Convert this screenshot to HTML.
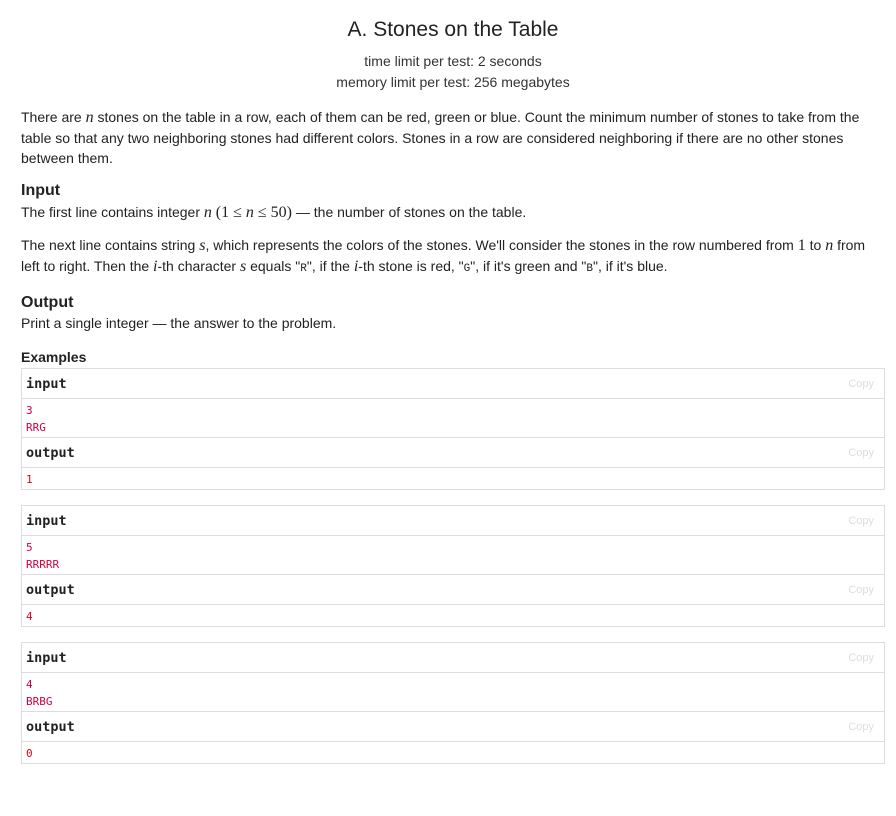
<!DOCTYPE html>
<html><head><meta charset="utf-8"><style>
body{margin:0;background:#fff;font-family:"Liberation Sans",sans-serif;color:#222;font-size:14px;}
.abs{position:absolute;}
.c{left:0;width:906px;text-align:center;}
.m{font-family:"Liberation Serif",serif;font-style:italic;font-size:16px;}
.r{font-family:"Liberation Serif",serif;font-size:16px;}
.p{left:21px;width:850px;line-height:20px;}
h3{margin:0;font-size:16px;font-weight:bold;}
.box{position:absolute;left:21px;width:862px;border:1px solid #ddd;}
.hd{height:29px;border-bottom:1px solid #ddd;position:relative;font-family:"DejaVu Sans Mono","Liberation Mono",monospace;font-weight:bold;font-size:13.5px;line-height:30px;padding-left:4px;color:#222;}
.hd span{position:absolute;right:10px;top:0;font-family:"Liberation Sans",sans-serif;font-weight:normal;font-size:11px;color:#ddd;}
.dt{font-family:"DejaVu Sans Mono","Liberation Mono",monospace;font-size:11px;line-height:17px;padding:3px 4px 1px;border-bottom:1px solid #ddd;color:#d00040;}
.dt:last-child{border-bottom:none;}
.code{font-family:"Liberation Mono",monospace;font-size:11px;}
</style></head><body>
<div class="abs c" style="top:18px;font-size:21px;color:#222;">A. Stones on the Table</div>
<div class="abs c" style="top:53px;font-size:14px;color:#333;">time limit per test: 2 seconds</div>
<div class="abs c" style="top:74px;font-size:14px;color:#333;">memory limit per test: 256 megabytes</div>
<div class="abs p" style="top:107px;">There are <span class="m">n</span> stones on the table in a row, each of them can be red, green or blue. Count the minimum number of stones to take from the table so that any two neighboring stones had different colors. Stones in a row are considered neighboring if there are no other stones between them.</div>
<div class="abs p" style="top:181px;"><h3>Input</h3></div>
<div class="abs p" style="top:202px;">The first line contains integer <span class="m">n</span> <span class="r">(1 ≤ <i>n</i> ≤ 50)</span> — the number of stones on the table.</div>
<div class="abs p" style="top:235px;">The next line contains string <span class="m">s</span>, which represents the colors of the stones. We'll consider the stones in the row numbered from <span class="r">1</span> to <span class="m">n</span> from left to right. Then the <span class="m">i</span>-th character <span class="m">s</span> equals "<span class="code">R</span>", if the <span class="m">i</span>-th stone is red, "<span class="code">G</span>", if it's green and "<span class="code">B</span>", if it's blue.</div>
<div class="abs p" style="top:293px;"><h3>Output</h3></div>
<div class="abs p" style="top:313px;">Print a single integer — the answer to the problem.</div>
<div class="abs p" style="top:347px;font-weight:bold;font-size:14px;">Examples</div>

<div class="box" style="top:368px;">
<div class="hd">input<span>Copy</span></div>
<div class="dt">3<br>RRG</div>
<div class="hd">output<span>Copy</span></div>
<div class="dt" style="color:#e00020">1</div>
</div>
<div class="box" style="top:505px;">
<div class="hd">input<span>Copy</span></div>
<div class="dt">5<br>RRRRR</div>
<div class="hd">output<span>Copy</span></div>
<div class="dt" style="color:#e00020">4</div>
</div>
<div class="box" style="top:642px;">
<div class="hd">input<span>Copy</span></div>
<div class="dt">4<br>BRBG</div>
<div class="hd">output<span>Copy</span></div>
<div class="dt" style="color:#e00020">0</div>
</div>
</body></html>
